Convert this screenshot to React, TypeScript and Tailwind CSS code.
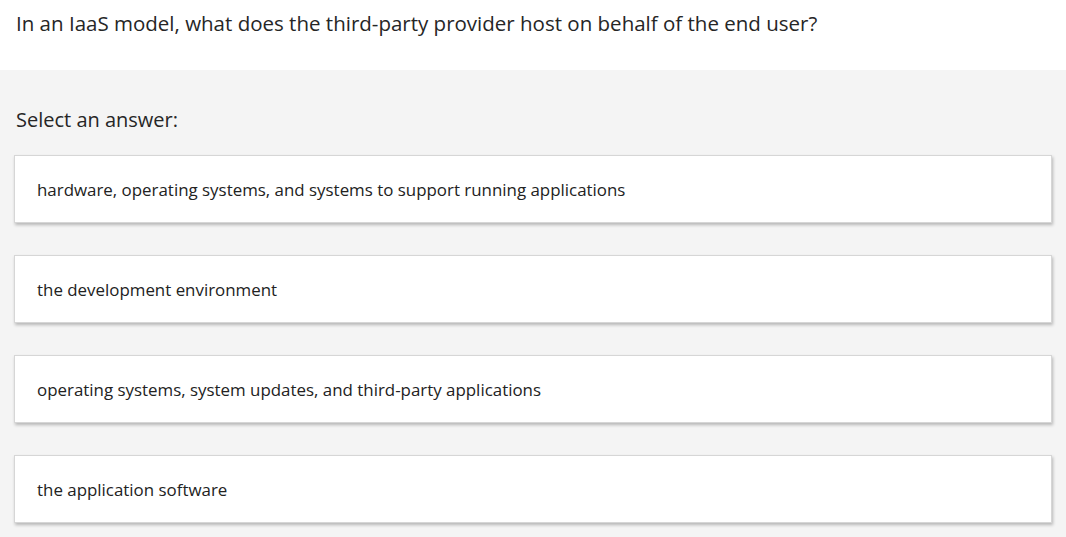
import React from "react";

const options = [
  "hardware, operating systems, and systems to support running applications",
  "the development environment",
  "operating systems, system updates, and third-party applications",
  "the application software",
];

export default function App() {
  return (
    <div className="w-[1066px] h-[537px] overflow-hidden bg-[#f4f4f4] text-[#222]" style={{ fontFamily: '"Open Sans", "Noto Sans", sans-serif' }}>
      <div className="h-[70px] bg-white px-4 pt-[9px]">
        <h1 className="text-[20.5px] leading-[28px] text-[#262626]">
          In an IaaS model, what does the third-party provider host on behalf of the end user?
        </h1>
      </div>
      <div className="px-[14px] pt-[36px]">
        <div className="pl-[2px] text-[20px] leading-[28px] text-[#262626]">Select an answer:</div>
        <div className="mt-[21px] flex flex-col gap-[32px]">
          {options.map((o) => (
            <div
              key={o}
              className="h-[68px] flex items-center bg-white border border-[#d6d6d6] shadow-[1px_2px_3px_rgba(0,0,0,0.25)] pl-[22px] pt-[2px] text-[16.9px] text-[#222]"
            >
              {o}
            </div>
          ))}
        </div>
      </div>
    </div>
  );
}
